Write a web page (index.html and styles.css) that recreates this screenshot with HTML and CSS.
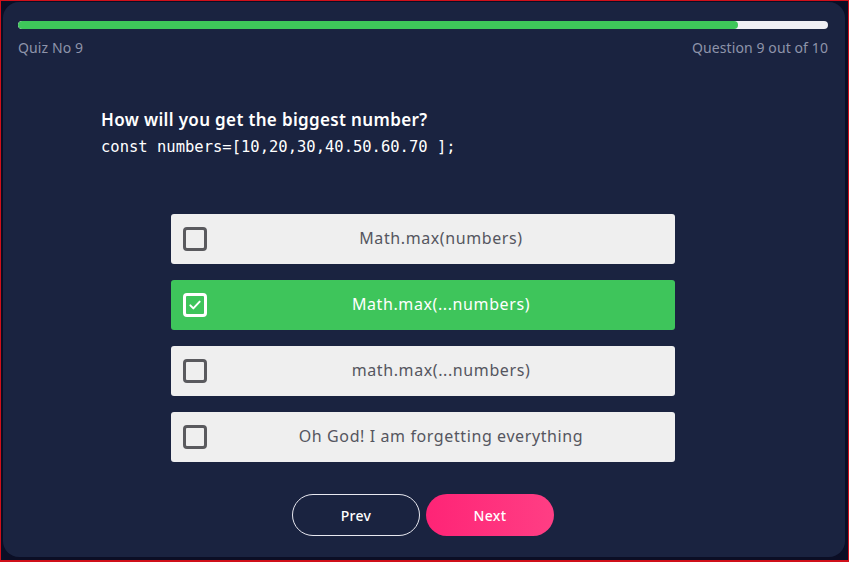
FILE: index.html
```html
<!DOCTYPE html>
<html lang="en">
<head>
<meta charset="utf-8">
<title>Quiz</title>
<link rel="stylesheet" href="styles.css">
</head>
<body>
<div class="frame">
  <main class="card">
    <div class="progress"><div class="progress-fill" style="width: 88.9%"></div></div>
    <div class="meta">
      <span>Quiz No 9</span>
      <span>Question 9 out of 10</span>
    </div>
    <section class="question">
      <h1 class="q-title">How will you get the biggest number?</h1>
      <code class="q-code">const numbers=[10,20,30,40.50.60.70 ];</code>
    </section>
    <ul class="options">
      <li class="option"><span class="box"></span><span class="opt-text">Math.max(numbers)</span></li>
      <li class="option selected"><span class="box"><svg viewBox="0 0 24 24" width="16" height="16"><path d="M5 12.5l4.5 4.5L19 7" fill="none" stroke="#fff" stroke-width="3" stroke-linecap="round" stroke-linejoin="round"/></svg></span><span class="opt-text">Math.max(...numbers)</span></li>
      <li class="option"><span class="box"></span><span class="opt-text">math.max(...numbers)</span></li>
      <li class="option"><span class="box"></span><span class="opt-text">Oh God! I am forgetting everything</span></li>
    </ul>
    <div class="nav">
      <button class="btn btn-prev">Prev</button>
      <button class="btn btn-next">Next</button>
    </div>
  </main>
</div>
</body>
</html>
```

FILE: styles.css
```css
* { box-sizing: border-box; }
html, body { margin: 0; height: 100%; }
body {
  background: #0b0e25;
  font-family: "Noto Sans", "Open Sans", sans-serif;
}
.frame {
  height: 100%;
  border: 1px solid #d0101a;
  border-bottom-width: 2px;
  padding: 1px 3px 3px 2px;
}
.card {
  height: 100%;
  background: #1a2340;
  border-radius: 16px;
  padding: 19px 17px 0 15px;
  display: flex;
  flex-direction: column;
}
.progress {
  height: 8px;
  border-radius: 4px;
  background: #efeff4;
  overflow: hidden;
}
.progress-fill {
  height: 100%;
  background: #3ec75a;
  border-radius: 4px;
}
.meta {
  display: flex;
  justify-content: space-between;
  color: #8e94aa;
  font-size: 14px;
  margin-top: 9px;
  line-height: 19px;
  letter-spacing: 0.1px;
}
.question {
  width: 644px;
  align-self: center;
  margin-top: 51px;
}
.q-title {
  margin: 0;
  color: #fff;
  font-size: 17px;
  font-weight: 600;
  line-height: 24px;
  letter-spacing: 0.35px;
}
.q-code {
  display: block;
  margin-top: 5px;
  color: #fff;
  font-family: "DejaVu Sans Mono", "Liberation Mono", monospace;
  font-size: 15.5px;
  line-height: 20px;
}
.options {
  list-style: none;
  margin: 57px 0 0;
  padding: 0;
  width: 504px;
  align-self: center;
  display: flex;
  flex-direction: column;
  gap: 16px;
}
.option {
  height: 50px;
  background: #efefef;
  border-radius: 3px;
  display: flex;
  align-items: center;
  padding: 0 12px;
  color: #555660;
  font-size: 16px;
  letter-spacing: 0.6px;
}
.box {
  width: 24px;
  height: 24px;
  border: 3px solid #5a5a5e;
  border-radius: 4px;
  flex: none;
  display: flex;
  align-items: center;
  justify-content: center;
}
.opt-text {
  flex: 1;
  text-align: center;
  padding-left: 12px;
  padding-bottom: 3px;
}
.option.selected {
  background: #3ec55b;
  color: #fff;
}
.option.selected .box { border-color: #fff; }
.nav {
  display: flex;
  justify-content: center;
  gap: 6px;
  margin-top: 32px;
}
.btn {
  width: 128px;
  height: 42px;
  border-radius: 21px;
  font-family: inherit;
  font-size: 14px;
  font-weight: 500;
  color: #fff;
  cursor: pointer;
  letter-spacing: 0.3px;
}
.btn-prev {
  background: transparent;
  border: 1px solid #e8e8f0;
}
.btn-next {
  border: none;
  background: linear-gradient(90deg, #fe2476, #ff3e84);
}
```
